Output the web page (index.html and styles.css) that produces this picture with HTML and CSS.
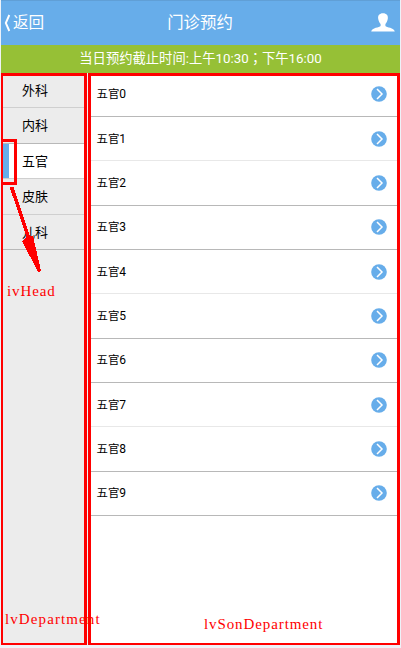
FILE: index.html
```html
<!DOCTYPE html>
<html lang="zh-CN">
<head>
<meta charset="utf-8">
<title>门诊预约</title>
<link rel="stylesheet" href="styles.css">
</head>
<body>
<main class="app">
  <header class="header">
    <a class="back"><svg width="8" height="18" viewBox="0 0 8 18"><path d="M6.3 1L2.8 9l3.5 8" fill="none" stroke="#fff" stroke-width="1.9"/></svg><span>返回</span></a>
    <h1>门诊预约</h1>
    <svg class="user" width="24" height="19" viewBox="0 0 24 19"><path d="M12 .3C8.4.3 6.7 2.6 7.2 5.8c.3 2.3 1.3 4 2.4 5.3v1.8c-1 1.6-8.8 1.5-9.4 5.6h23.6c-.6-4.1-8.4-4-9.4-5.6v-1.8c1.1-1.3 2.1-3 2.4-5.3C17.3 2.6 15.6.3 12 .3z" fill="#fff"/></svg>
  </header>
  <p class="notice">当日预约截止时间:上午10:30<span class="semi" lang="zh-TW">；</span>下午16:00</p>
  <div class="panels">
    <nav class="departments">
      <a>外科</a>
      <a class="dark">内科</a>
      <a class="active">五官</a>
      <a>皮肤</a>
      <a class="dark">儿科</a>
    </nav>
    <section class="clinics">
      <div class="row"><span>五官<b>0</b></span><svg width="16" height="16" viewBox="0 0 16 16"><circle cx="8" cy="8" r="7.8"/><path d="M6 3l5 5-5 5"/></svg></div>
      <div class="row light"><span>五官<b>1</b></span><svg width="16" height="16" viewBox="0 0 16 16"><circle cx="8" cy="8" r="7.8"/><path d="M6 3l5 5-5 5"/></svg></div>
      <div class="row"><span>五官<b>2</b></span><svg width="16" height="16" viewBox="0 0 16 16"><circle cx="8" cy="8" r="7.8"/><path d="M6 3l5 5-5 5"/></svg></div>
      <div class="row"><span>五官<b>3</b></span><svg width="16" height="16" viewBox="0 0 16 16"><circle cx="8" cy="8" r="7.8"/><path d="M6 3l5 5-5 5"/></svg></div>
      <div class="row light"><span>五官<b>4</b></span><svg width="16" height="16" viewBox="0 0 16 16"><circle cx="8" cy="8" r="7.8"/><path d="M6 3l5 5-5 5"/></svg></div>
      <div class="row"><span>五官<b>5</b></span><svg width="16" height="16" viewBox="0 0 16 16"><circle cx="8" cy="8" r="7.8"/><path d="M6 3l5 5-5 5"/></svg></div>
      <div class="row"><span>五官<b>6</b></span><svg width="16" height="16" viewBox="0 0 16 16"><circle cx="8" cy="8" r="7.8"/><path d="M6 3l5 5-5 5"/></svg></div>
      <div class="row light"><span>五官<b>7</b></span><svg width="16" height="16" viewBox="0 0 16 16"><circle cx="8" cy="8" r="7.8"/><path d="M6 3l5 5-5 5"/></svg></div>
      <div class="row"><span>五官<b>8</b></span><svg width="16" height="16" viewBox="0 0 16 16"><circle cx="8" cy="8" r="7.8"/><path d="M6 3l5 5-5 5"/></svg></div>
      <div class="row"><span>五官<b>9</b></span><svg width="16" height="16" viewBox="0 0 16 16"><circle cx="8" cy="8" r="7.8"/><path d="M6 3l5 5-5 5"/></svg></div>
    </section>
  </div>
  <div class="head-box"></div>
  <svg class="arrow" width="50" height="100" viewBox="0 0 50 100" shape-rendering="crispEdges"><path d="M11.5 7L29 59" stroke="#f00" stroke-width="3.5"/><path d="M22 61L26 57L33 56L41 91L38 92Z" fill="#f00"/></svg>
  <span class="note note-head">ivHead</span>
  <span class="note note-left">lvDepartment</span>
  <span class="note note-right">lvSonDepartment</span>
</main>
</body>
</html>
```
FILE: styles.css
```css
* { box-sizing: border-box; }
body {
  margin: 0;
  background: #edf2f8;
  font-family: Roboto, "Noto Sans CJK SC", sans-serif;
  color: #000;
  overflow: hidden;
}
svg { display: block; flex: none; }
.app { position: relative; width: 399px; margin-left: 1px; }
.header {
  display: grid;
  grid-template-columns: 1fr auto 1fr;
  align-items: center;
  height: 45px;
  padding: 0 5px 0 2px;
  background: #67adea;
  border-top: 1px solid #609fd6;
  color: #fff;
}
.back { display: flex; align-items: center; gap: 2px; font-size: 15.6px; line-height: 20px; }
h1 { margin: 0 -1px 0 1px; font-size: 16.4px; line-height: 20px; font-weight: 400; }
.user { justify-self: end; margin-top: -2px; }
.notice {
  height: 28px;
  margin: 0;
  background: #96c036;
  color: #fff;
  font-size: 13.3px;
  line-height: 28px;
  text-align: center;
  white-space: nowrap;
}
.semi { font-family: "Noto Sans CJK TC", sans-serif; line-height: 1; }
.panels { display: flex; gap: 1px; height: 572px; }
.departments {
  width: 86px;
  border: solid #f00;
  border-width: 3px 3px 2px 2px;
  background: #ececec;
}
.departments a {
  display: block;
  height: 35.5px;
  padding-left: 19px;
  border-bottom: 1px solid #cfcfcf;
  font-size: 13px;
  line-height: 35px;
}
.departments a:first-child { height: 32px; line-height: 29px; }
.departments a.dark { border-color: #b8b8b8; }
.departments a.active { background: linear-gradient(90deg, #67adea 6px, #fff 6px); }
.clinics {
  width: 312px;
  border: solid #f00;
  border-width: 3px 3px 2px;
  background: #fff;
}
.row {
  display: flex;
  align-items: center;
  justify-content: space-between;
  height: 44.33px;
  padding: 0 10px 0 5.5px;
  border-bottom: 1px solid #b8b8b8;
  font-size: 11.4px;
}
.row span { padding-bottom: 2px; }
.row b { font-size: 12px; font-weight: 400; }
.row:first-child { height: 41px; padding-bottom: 4px; }
.row.light { border-color: #e8e8e8; }
.row circle { fill: #67adea; }
.row path { fill: none; stroke: #fff; stroke-width: 1.5; }
.head-box {
  position: absolute;
  left: 0;
  top: 139px;
  width: 16px;
  height: 46px;
  border: 3px solid #f00;
  border-left-width: 2px;
}
.arrow { position: absolute; left: -1px; top: 180px; }
.note {
  position: absolute;
  color: #f00;
  font-family: "Liberation Serif", serif;
  font-size: 15px;
  line-height: 16px;
  white-space: nowrap;
}
.note-head { left: 6px; top: 283px; letter-spacing: .9px; }
.note-left { left: 4px; top: 611px; letter-spacing: 1.1px; }
.note-right { left: 203px; top: 616px; letter-spacing: .9px; }
```
